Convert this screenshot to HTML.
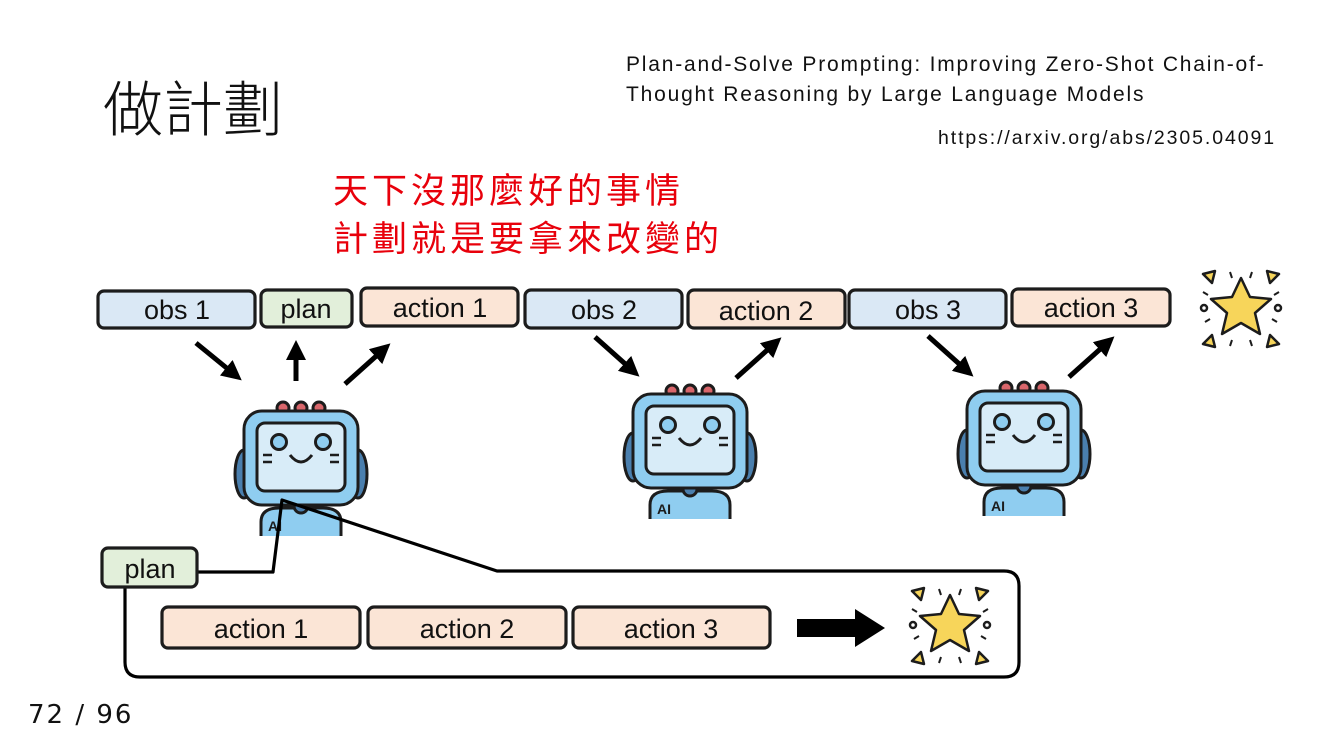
<!DOCTYPE html>
<html><head><meta charset="utf-8"><style>
body{margin:0;width:1334px;height:750px;background:#fff;position:relative;overflow:hidden;font-family:"Liberation Sans","Noto Sans CJK TC",sans-serif}
.t{position:absolute;white-space:nowrap;line-height:1}
</style></head><body>
<div class="t" style="left:103px;top:76px;font-size:60px;font-family:'Noto Sans CJK TC',sans-serif;font-weight:300;color:#111">做計劃</div>
<div class="t" style="left:626px;top:50px;font-size:21px;letter-spacing:1.8px;color:#111;line-height:30px">Plan-and-Solve Prompting: Improving Zero-Shot Chain-of-<br>Thought Reasoning by Large Language Models</div>
<div class="t" style="left:938px;top:129px;font-size:19.5px;letter-spacing:1.9px;color:#111">https://arxiv.org/abs/2305.04091</div>
<div class="t" style="left:333px;top:165px;font-size:35px;letter-spacing:4px;color:#e8000b;font-family:'Noto Sans CJK TC',sans-serif;line-height:48px">天下沒那麼好的事情<br>計劃就是要拿來改變的</div>
<div class="t" style="left:28px;top:702px;font-size:26px;letter-spacing:2px;font-family:'DejaVu Sans',sans-serif;color:#111">72 / 96</div>

<svg width="1334" height="750" style="position:absolute;left:0;top:0" font-family="Liberation Sans, sans-serif">
<defs>
<g id="robot" stroke="#1c1c1c" stroke-width="3" stroke-linejoin="round">
 <ellipse cx="9" cy="76" rx="9" ry="24" fill="#4a7fae"/>
 <ellipse cx="123" cy="76" rx="9" ry="24" fill="#4a7fae"/>
 <path d="M26 138 L26 124 Q26 110 44 110 L88 110 Q106 110 106 124 L106 138" fill="#8fcdf0"/>
 <circle cx="66" cy="108" r="7" fill="#4a7fae"/>
 <text x="33" y="133" font-size="14" font-weight="bold" fill="#1c1c1c" stroke="none">AI</text>
 <circle cx="48" cy="10" r="6" fill="#d9666b"/>
 <circle cx="66" cy="10" r="6" fill="#d9666b"/>
 <circle cx="84" cy="10" r="6" fill="#d9666b"/>
 <rect x="9" y="13" width="114" height="94" rx="18" fill="#8fcdf0"/>
 <rect x="22" y="25" width="88" height="68" rx="8" fill="#d8ecf8"/>
 <circle cx="44" cy="44" r="7.5" fill="#8fcdf0"/>
 <circle cx="88" cy="44" r="7.5" fill="#8fcdf0"/>
 <path d="M55 57 Q66 71 77 57" fill="none"/>
 <path d="M28 57h9M28 64h9M95 57h9M95 64h9" fill="none" stroke-width="2.5"/>
</g>
<g id="star" stroke="#1c1c1c" stroke-width="2.5" stroke-linejoin="round">
 <polygon points="41,10 50,29 71,31 55,45 60,66 41,55 22,66 27,45 11,31 32,29" fill="#f7d55a"/>
 <path d="M3 6 L15 3 L12 15 Z M79 6 L67 3 L70 15 Z M3 76 L15 79 L12 67 Z M79 76 L67 79 L70 67 Z" fill="#f7d55a"/>
 <path d="M30 4 L32 10 M52 4 L50 10 M30 78 L32 72 M52 78 L50 72 M3 24 L8 27 M79 24 L74 27 M5 54 L10 51 M77 54 L72 51" fill="none" stroke-width="2"/>
 <circle cx="4" cy="40" r="3" fill="#fff"/><circle cx="78" cy="40" r="3" fill="#fff"/>
</g>
<marker id="ah" markerWidth="4" markerHeight="4" refX="2" refY="2" orient="auto"><path d="M0,0 L4,2 L0,4 Z" fill="#000"/></marker>
</defs>
<g stroke="#1c1c1c" stroke-width="3.2" font-size="27" text-anchor="middle">
 <rect x="98" y="291" width="157" height="37" rx="6" fill="#dae8f5"/>
 <rect x="261" y="290" width="91" height="37" rx="6" fill="#e2efda"/>
 <rect x="361" y="288" width="157" height="38" rx="6" fill="#fbe5d6"/>
 <rect x="525" y="290" width="157" height="38" rx="6" fill="#dae8f5"/>
 <rect x="688" y="290" width="157" height="38" rx="6" fill="#fbe5d6"/>
 <rect x="849" y="290" width="157" height="38" rx="6" fill="#dae8f5"/>
 <rect x="1012" y="289" width="158" height="37" rx="6" fill="#fbe5d6"/>
 <g stroke="none" fill="#111">
 <text x="177" y="319">obs 1</text><text x="306" y="318">plan</text><text x="440" y="317">action 1</text>
 <text x="604" y="319">obs 2</text><text x="766" y="320">action 2</text><text x="928" y="319">obs 3</text><text x="1091" y="317">action 3</text>
 </g>
</g>
<g stroke="#000" stroke-width="5" marker-end="url(#ah)">
 <line x1="196" y1="343" x2="234" y2="374"/>
 <line x1="296" y1="381" x2="296" y2="350"/>
 <line x1="345" y1="384" x2="383" y2="350"/>
 <line x1="595" y1="337" x2="632" y2="370"/>
 <line x1="736" y1="378" x2="774" y2="344"/>
 <line x1="928" y1="336" x2="966" y2="370"/>
 <line x1="1069" y1="377" x2="1107" y2="343"/>
</g>
<use href="#robot" x="235" y="398"/>
<use href="#robot" x="624" y="381"/>
<use href="#robot" x="958" y="378"/>
<use href="#star" x="1200" y="268"/>
<use href="#star" x="909" y="585"/>
<path d="M125 587 L125 662 Q125 677 140 677 L1004 677 Q1019 677 1019 662 L1019 586 Q1019 571 1004 571 L497 571 L282 500 L273 572 L197 572" fill="none" stroke="#000" stroke-width="3.2" stroke-linejoin="round"/>
<g stroke="#1c1c1c" stroke-width="3.2" font-size="27" text-anchor="middle">
 <rect x="102" y="548" width="95" height="39" rx="6" fill="#e2efda"/>
 <rect x="162" y="607" width="198" height="41" rx="6" fill="#fbe5d6"/>
 <rect x="368" y="607" width="198" height="41" rx="6" fill="#fbe5d6"/>
 <rect x="573" y="607" width="197" height="41" rx="6" fill="#fbe5d6"/>
 <g stroke="none" fill="#111">
 <text x="150" y="578">plan</text><text x="261" y="638">action 1</text><text x="467" y="638">action 2</text><text x="671" y="638">action 3</text>
 </g>
</g>
<polygon points="797,619 855,619 855,609 885,628 855,647 855,637 797,637" fill="#000"/>
</svg>
</body></html>
